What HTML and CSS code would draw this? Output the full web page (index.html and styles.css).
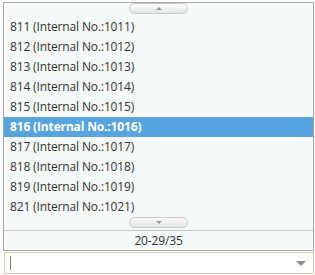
FILE: index.html
```html
<!DOCTYPE html>
<html>
<head>
  <title>Extension Picker</title>
  <link rel="stylesheet" href="styles.css">
</head>
<body>
  <div class="popup">
    <div class="scroll-row top">
      <button type="button" class="scroll-btn"><span class="arrow up"></span></button>
    </div>
    <ul class="options">
      <li>811 (Internal No.:1011)</li>
      <li>812 (Internal No.:1012)</li>
      <li>813 (Internal No.:1013)</li>
      <li>814 (Internal No.:1014)</li>
      <li>815 (Internal No.:1015)</li>
      <li class="selected">816 (Internal No.:1016)</li>
      <li>817 (Internal No.:1017)</li>
      <li>818 (Internal No.:1018)</li>
      <li>819 (Internal No.:1019)</li>
      <li>821 (Internal No.:1021)</li>
    </ul>
    <div class="scroll-row">
      <button type="button" class="scroll-btn"><span class="arrow down"></span></button>
    </div>
    <div class="pager">20-29/35</div>
  </div>
  <div class="combo">
    <span class="caret"></span>
    <span class="combo-arrow"></span>
  </div>
</body>
</html>
```

FILE: styles.css
```css
body {
  margin: 0;
  padding: 2px 1px 0 3px;
  font-family: "Open Sans", Arial, sans-serif;
  font-size: 12px;
  letter-spacing: -0.15px;
  color: #333;
  background-color: #ffffff;
}
.popup {
  border: 1px solid #a7a7a7;
  background-color: #f6f9f9;
}
.scroll-row {
  display: flex;
  justify-content: center;
  height: 13px;
}
.scroll-row.top {
  height: 14px;
}
.scroll-btn {
  width: 59px;
  height: 11px;
  padding: 0;
  border: 1px solid #c9cccc;
  border-radius: 6px;
  background: linear-gradient(#fbfbfb, #e4e6e6);
  display: flex;
  justify-content: center;
  align-items: center;
}
.arrow {
  width: 0;
  height: 0;
  border-left: 3px solid transparent;
  border-right: 3px solid transparent;
}
.arrow.up {
  border-bottom: 3px solid #9a9a9a;
}
.arrow.down {
  border-top: 3px solid #9a9a9a;
}
.options {
  list-style: none;
  margin: 0;
  padding: 0;
}
.options li {
  height: 20px;
  line-height: 20px;
  padding-left: 6px;
  white-space: nowrap;
}
.options li.selected {
  background-color: #58a4de;
  color: #ffffff;
  font-weight: bold;
}
.pager {
  border-top: 1px solid #c6c9c9;
  height: 19px;
  line-height: 19px;
  text-align: center;
}
.combo {
  margin-top: 1px;
  margin-left: 1px;
  height: 20px;
  border: 1px solid #d8cca6;
  background-color: #ffffff;
  display: flex;
  align-items: center;
  justify-content: space-between;
  padding: 0 7px 0 5px;
}
.caret {
  width: 1px;
  height: 14px;
  background-color: #777;
}
.combo-arrow {
  width: 0;
  height: 0;
  border-left: 5px solid transparent;
  border-right: 5px solid transparent;
  border-top: 5px solid #8e8e8e;
}
```
